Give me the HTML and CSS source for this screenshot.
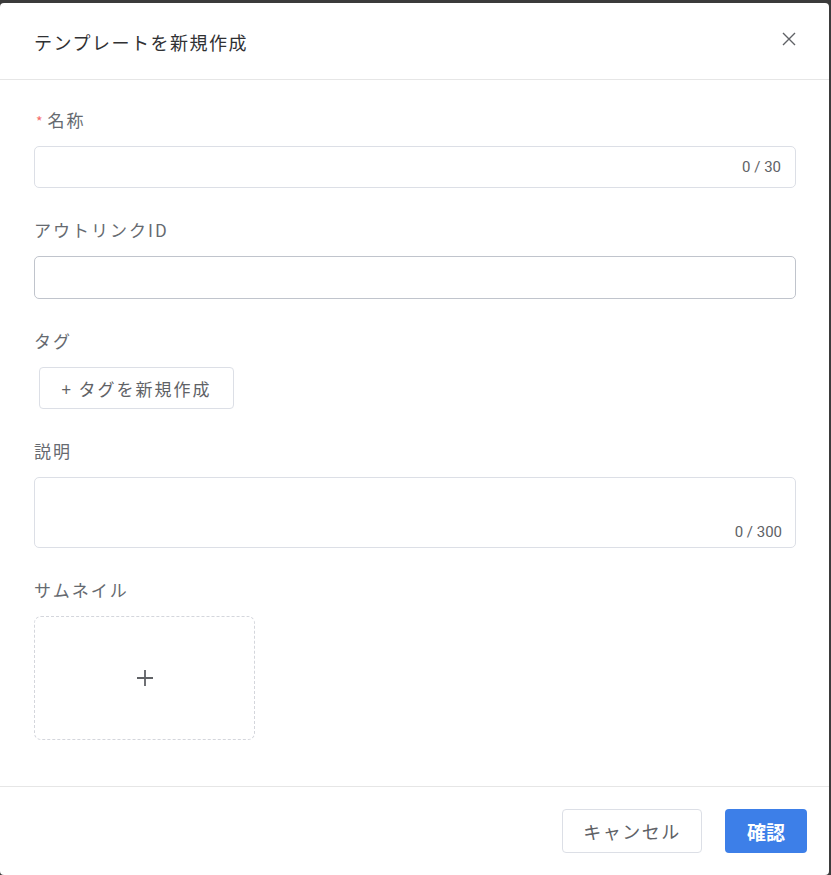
FILE: index.html
```html
<!DOCTYPE html>
<html lang="ja">
<head>
<meta charset="utf-8">
<link rel="stylesheet" href="styles.css">
</head>
<body>
<div class="dialog">
  <header class="dlg-head">
    <span class="dlg-title">テンプレートを新規作成</span>
    <svg class="close" width="14" height="14" viewBox="0 0 14 14"><path d="M1 1L13 13M13 1L1 13" stroke="#606266" stroke-width="1.4" fill="none"/></svg>
  </header>
  <div class="dlg-body">
    <div class="field">
      <div class="label"><span class="req">*</span>名称</div>
      <div class="input"><span class="count">0 / 30</span></div>
    </div>
    <div class="field">
      <div class="label">アウトリンクID</div>
      <div class="input input-dark"></div>
    </div>
    <div class="field">
      <div class="label">タグ</div>
      <div class="tag-btn">+ タグを新規作成</div>
    </div>
    <div class="field">
      <div class="label">説明</div>
      <div class="textarea"><span class="count">0 / 300</span></div>
    </div>
    <div class="field">
      <div class="label">サムネイル</div>
      <div class="upload">
        <svg width="18" height="18" viewBox="0 0 18 18"><path d="M9 1V17M1 9H17" stroke="#606266" stroke-width="1.8" fill="none"/></svg>
      </div>
    </div>
  </div>
  <footer class="dlg-foot">
    <div class="btn btn-cancel">キャンセル</div>
    <div class="btn btn-ok">確認</div>
  </footer>
</div>
</body>
</html>
```
FILE: styles.css
```css
html, body {
  margin: 0;
  padding: 0;
  background: #3b3b3b;
  height: 875px;
  overflow: hidden;
}
body {
  font-family: "Noto Sans CJK JP", "Noto Sans", Roboto, sans-serif;
  padding-top: 3px;
}
.dialog {
  width: 829px;
  height: 872px;
  background: #fff;
  border-radius: 4px;
  display: flex;
  flex-direction: column;
}
.dlg-head {
  height: 77px;
  border-bottom: 1px solid #e6e6e6;
  display: flex;
  align-items: center;
  justify-content: space-between;
  padding: 0 34px 0 34px;
  box-sizing: border-box;
}
.dlg-title {
  font-size: 18px;
  color: #303133;
  letter-spacing: 1.5px;
  margin-top: 1px;
}
.close {
  margin-top: -5px;
  margin-right: -1px;
}
.dlg-body {
  padding: 30px 33px 0 34px;
  height: 706px;
  box-sizing: border-box;
  display: flex;
  flex-direction: column;
  gap: 32px;
}
.field {
  display: flex;
  flex-direction: column;
  gap: 16px;
  align-items: flex-start;
}
.label {
  font-size: 17px;
  line-height: 20px;
  height: 20px;
  color: #666a70;
  letter-spacing: 2px;
}
.req {
  color: #f56c6c;
  font-size: 14px;
  margin-left: 2px;
  margin-right: 5px;
  letter-spacing: 0;
}
.input {
  width: 100%;
  height: 42px;
  border: 1px solid #dcdfe6;
  border-radius: 5px;
  box-sizing: border-box;
  display: flex;
  align-items: center;
  justify-content: flex-end;
  padding-right: 14px;
}
.input-dark {
  border-color: #c0c4cc;
  height: 43px;
}
.count {
  font-family: Roboto, "Noto Sans", sans-serif;
  font-size: 15px;
  color: #606266;
}
.tag-btn {
  margin-left: 5px;
  height: 42px;
  width: 195px;
  box-sizing: border-box;
  border: 1px solid #dcdfe6;
  border-radius: 4px;
  font-size: 17px;
  color: #606266;
  display: flex;
  align-items: center;
  justify-content: center;
  letter-spacing: 2px;
}
.textarea {
  width: 100%;
  height: 71px;
  border: 1px solid #dcdfe6;
  border-radius: 5px;
  box-sizing: border-box;
  display: flex;
  align-items: flex-end;
  justify-content: flex-end;
  padding: 0 13px 6px 0;
}
.upload {
  width: 221px;
  height: 124px;
  box-sizing: border-box;
  border: 1px dashed #d4d6dc;
  border-radius: 7px;
  display: flex;
  align-items: center;
  justify-content: center;
}
.dlg-foot {
  border-top: 1px solid #e6e6e6;
  display: flex;
  justify-content: flex-end;
  gap: 23px;
  padding: 22px 22px 0 0;
}
.btn {
  height: 44px;
  box-sizing: border-box;
  border-radius: 4px;
  display: flex;
  align-items: center;
  justify-content: center;
  font-size: 18px;
}
.btn-cancel {
  width: 140px;
  border: 1px solid #dcdfe6;
  color: #606266;
  letter-spacing: 1.5px;
}
.btn-ok {
  width: 82px;
  background: #3d7fe8;
  color: #fff;
  font-weight: 700;
  font-size: 19px;
}
```
